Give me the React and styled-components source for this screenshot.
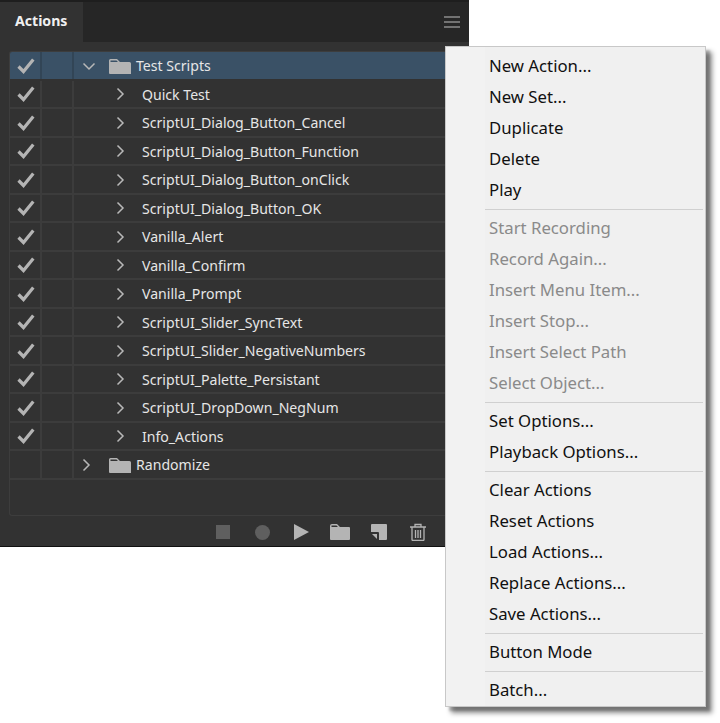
import React from "react";
import styled, { createGlobalStyle } from "styled-components";

const Global = createGlobalStyle`
  html, body { margin: 0; padding: 0; background: #fff; }
  body { width: 720px; height: 723px; overflow: hidden; font-family: "Noto Sans", "Open Sans", sans-serif; }
`;
const Page = styled.div`position: relative; width: 720px; height: 723px; background: #fff;`;
const Panel = styled.section`
  width: 469px; height: 547px; background: #323232; display: flex; flex-direction: column;
  border-bottom: 1px solid #111; box-sizing: border-box; overflow: hidden;
`;
const TabBar = styled.header`
  height: 42px; flex: none; background: #262626; display: flex; justify-content: space-between; align-items: stretch;
  border-top: 2px solid #1e1e1e; box-sizing: border-box;
`;
const Tab = styled.div`
  width: 83px; background: #323232; color: #f0f0f0; font-size: 14.1px; font-weight: 700;
  display: flex; align-items: center; padding: 0 0 4px 15px; box-sizing: border-box;
`;
const MenuGlyph = styled.svg`width: 16px; height: 12px; margin: 14px 9px 0 0;`;
const List = styled.div`
  margin: 9px 0 0 9px; width: 460px; height: 465px; border: 1px solid #3d3d3d; border-right: 0;
  border-radius: 3px 0 0 3px; box-sizing: border-box; display: flex; flex-direction: column; overflow: hidden;
`;
const Row = styled.div`
  height: 28.5px; flex: none; box-sizing: border-box; display: grid; grid-template-columns: 32px 32px 1fr;
  background: ${p => (p.$selected ? "#3a5166" : "#323232")};
  border-bottom: 2px solid ${p => (p.$selected ? "#323232" : "#3c3c3c")};
`;
const Cell = styled.div`
  display: flex; align-items: center; box-sizing: border-box; padding-top: 1px;
  border-right: 2px solid ${p => (p.$selected ? "#324556" : "#3c3c3c")};
  &:last-child { border-right: 0; }
`;
const Check = styled.svg`width: 18px; height: 16px; margin-left: 7px; color: #b4b4b4;`;
const ChevSlot = styled.span`
  width: 35px; flex: none; display: flex; align-items: center; padding-left: ${p => p.$left}px; box-sizing: border-box;
`;
const ActionSlot = styled.span`
  width: 68px; flex: none; display: flex; align-items: center; padding-left: 39px; box-sizing: border-box;
`;
const Chev = styled.svg`width: 14px; height: 14px; flex: none; color: #b8b8b8;`;
const SetIcon = styled.svg`width: 22px; height: 16px; flex: none; color: #b4b4b4;`;
const Label = styled.span`color: #e6e6e6; font-size: 14.1px;`;
const SetLabel = styled(Label)`margin-left: 5px;`;
const Footer = styled.footer`
  flex: 1; display: flex; justify-content: flex-end; align-items: center; padding: 2px 31.5px 0 0;
`;
const FootBtn = styled.span`
  width: 39px; display: flex; justify-content: center; align-items: center;
  color: ${p => (p.$dim ? "#5f5f5f" : "#b4b4b4")};
`;
const Menu = styled.nav`
  position: absolute; left: 445px; top: 46px; width: 261px; height: 661px; box-sizing: border-box;
  background: #f0f0f0; border: 1px solid #c8c8c8; padding: 4px 2px 0 0;
  box-shadow: 4px 4px 2px rgba(0,0,0,.18), 6px 6px 5px rgba(0,0,0,.45);
  background-image: linear-gradient(90deg, #f2f2f2 39px, #f0f0f0 39px);
`;
const Item = styled.div`
  height: 31px; display: flex; align-items: center; padding-left: 43px; font-size: 16.75px; line-height: 1;
  color: ${p => (p.$disabled ? "#8a8a8a" : "#111")};
`;
const Sep = styled.div`height: 7px; display: flex; align-items: center; margin-left: 39px;
  &::after { content: ""; flex: 1; height: 1px; background: #d0d0d0; }
`;

const actions = ["Quick Test","ScriptUI_Dialog_Button_Cancel","ScriptUI_Dialog_Button_Function","ScriptUI_Dialog_Button_onClick","ScriptUI_Dialog_Button_OK","Vanilla_Alert","Vanilla_Confirm","Vanilla_Prompt","ScriptUI_Slider_SyncText","ScriptUI_Slider_NegativeNumbers","ScriptUI_Palette_Persistant","ScriptUI_DropDown_NegNum","Info_Actions"];
const menu = [
  ["New Action...","New Set...","Duplicate","Delete","Play"],
  ["Start Recording","Record Again...","Insert Menu Item...","Insert Stop...","Insert Select Path","Select Object..."],
  ["Set Options...","Playback Options..."],
  ["Clear Actions","Reset Actions","Load Actions...","Replace Actions...","Save Actions..."],
  ["Button Mode"],
  ["Batch..."],
];

const CheckIcon = () => (
  <Check viewBox="0 0 18 16"><path d="M1.500 8.500l5 5L16.300 1.500" fill="none" stroke="currentColor" strokeWidth="3.200" /></Check>
);
const Right = () => (
  <Chev viewBox="0 0 14 14"><path d="M4.500 1.500L10 7l-5.500 5.500" fill="none" stroke="currentColor" strokeWidth="1.500" /></Chev>
);
const Down = () => (
  <Chev viewBox="0 0 14 14"><path d="M1.500 4.500L7 10l5.500-5.500" fill="none" stroke="currentColor" strokeWidth="1.500" /></Chev>
);
const Folder = () => (
  <SetIcon viewBox="0 0 22 16">
    <path fill="currentColor" fillRule="evenodd" d="M0 2.500Q0 1 1.500 1H8l3 3h9.500Q22 4 22 5.500V16H1Q0 16 0 15Z M1.500 2.500V4h7.500L7.500 2.500Z" />
  </SetIcon>
);

export default function App() {
  return (
    <Page>
      <Global />
      <Panel>
        <TabBar>
          <Tab>Actions</Tab>
          <MenuGlyph viewBox="0 0 16 12"><path d="M0 1h16M0 6h16M0 11h16" stroke="#8c8c8c" strokeWidth="1.500" /></MenuGlyph>
        </TabBar>
        <List>
          <Row $selected>
            <Cell $selected><CheckIcon /></Cell>
            <Cell $selected />
            <Cell>
              <ChevSlot $left={8}><Down /></ChevSlot>
              <Folder />
              <SetLabel>Test Scripts</SetLabel>
            </Cell>
          </Row>
          {actions.map(a => (
            <Row key={a}>
              <Cell><CheckIcon /></Cell>
              <Cell />
              <Cell><ActionSlot><Right /></ActionSlot><Label>{a}</Label></Cell>
            </Row>
          ))}
          <Row>
            <Cell />
            <Cell />
            <Cell>
              <ChevSlot $left={5}><Right /></ChevSlot>
              <Folder />
              <SetLabel>Randomize</SetLabel>
            </Cell>
          </Row>
        </List>
        <Footer>
          <FootBtn $dim><svg width="14" height="14"><rect width="14" height="14" fill="currentColor" /></svg></FootBtn>
          <FootBtn $dim><svg width="15" height="15"><circle cx="7.500" cy="7.500" r="7.500" fill="currentColor" /></svg></FootBtn>
          <FootBtn><svg width="15" height="16"><path d="M0 0l15 8L0 16z" fill="currentColor" /></svg></FootBtn>
          <FootBtn><svg width="20" height="16" viewBox="0 0 20 16"><path fill="currentColor" fillRule="evenodd" d="M0 2Q0 0 2 0h5l3 3h9q1 0 1 1v11q0 1-1 1H1q-1 0-1-1Z M1.500 1.500V3h6.500L6.500 1.500Z" /></svg></FootBtn>
          <FootBtn><svg width="16" height="16" viewBox="0 0 16 16"><path fill="currentColor" d="M1 0h14q1 0 1 1v14q0 1-1 1H8V9Q8 8 7 8H0V1q0-1 1-1Z" /><path fill="currentColor" d="M1 10h5v5z" /></svg></FootBtn>
          <FootBtn><svg width="16" height="18" viewBox="0 0 16 18"><g fill="none" stroke="currentColor" strokeWidth="1.300"><path d="M0 4h16M5 4V1.500h6V4M2 4v12.500q0 1 1 1h10q1 0 1-1V4M5.500 7v8M8 7v8M10.500 7v8" /></g></svg></FootBtn>
        </Footer>
      </Panel>
      <Menu>
        {menu.map((group, g) => (
          <React.Fragment key={g}>
            {g > 0 && <Sep />}
            {group.map(t => <Item key={t} $disabled={g === 1}>{t}</Item>)}
          </React.Fragment>
        ))}
      </Menu>
    </Page>
  );
}
